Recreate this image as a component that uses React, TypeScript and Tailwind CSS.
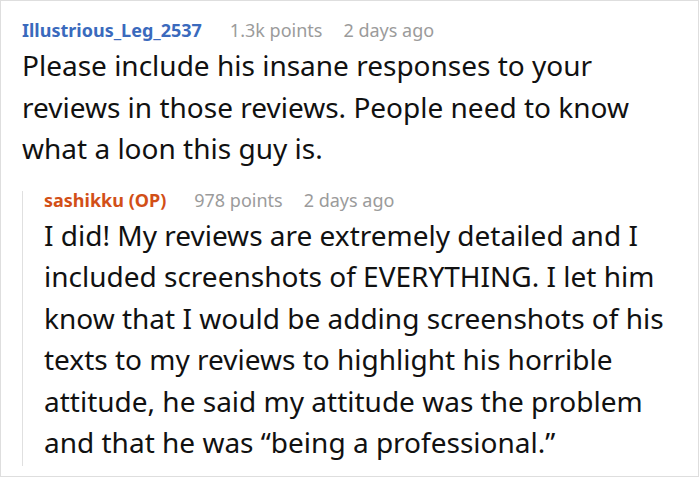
import React from "react";

function Meta({ name, nameColor, points }: { name: string; nameColor: string; points: string }) {
  return (
    <div className="flex items-baseline text-[18px] leading-[18px] whitespace-nowrap">
      <span className={`font-bold ${nameColor}`}>{name}</span>
      <span className="ml-[28px] text-[#9b9b9b]">{points}</span>
      <span className="ml-[21px] text-[#9b9b9b]">2 days ago</span>
    </div>
  );
}

export default function App() {
  return (
    <div className="w-[700px] h-[478px] bg-white" style={{ fontFamily: '"Noto Sans", "Open Sans", sans-serif' }}>
      <div className="w-[699px] h-[477px] border border-[#dedede] box-border pl-[21px] pt-[20px]">
        <Meta name="Illustrious_Leg_2537" nameColor="text-[#3a6abd]" points="1.3k points" />
        <p className="mt-[6px] text-[28px] leading-[41.5px] text-[#111111] whitespace-nowrap">
          Please include his insane responses to your
          <br />
          reviews in those reviews. People need to know
          <br />
          what a loon this guy is.
        </p>
        <div className="mt-[21px] border-l border-[#e0e0e0] pl-[21px] pb-[2px]">
          <Meta name="sashikku (OP)" nameColor="text-[#d24f17]" points="978 points" />
          <p className="mt-[6px] text-[28px] leading-[41.5px] text-[#111111] whitespace-nowrap">
            I did! My reviews are extremely detailed and I
            <br />
            included screenshots of EVERYTHING. I let him
            <br />
            know that I would be adding screenshots of his
            <br />
            texts to my reviews to highlight his horrible
            <br />
            attitude, he said my attitude was the problem
            <br />
            and that he was “being a professional.”
          </p>
        </div>
      </div>
    </div>
  );
}
